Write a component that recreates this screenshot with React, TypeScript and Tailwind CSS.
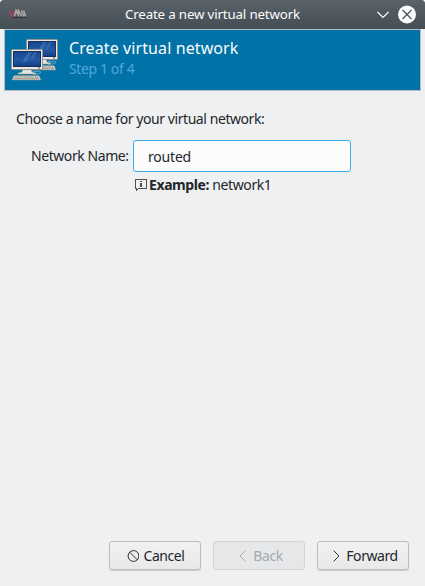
import React from "react";

function Monitor({ x, y }: { x: number; y: number }) {
  return (
    <g transform={`translate(${x} ${y})`}>
      <path d="M12 20h8l1 3 4 1v1H7v-1l4-1z" fill="#e6e6df" stroke="#8d8e88" strokeWidth=".5" />
      <path d="M22 22.5q9-.5 8 1t-8 2" fill="none" stroke="#5fa6cb" strokeWidth="1" />
      <rect x=".5" y=".5" width="31" height="20" rx="1" fill="#e9e9e2" stroke="#92938c" />
      <rect x="2" y="2" width="28" height="16" fill="#172f62" />
      <rect x="3" y="3" width="26" height="14" fill="url(#screen)" />
      <path d="M17 3h4l-5 9-5 2zM23 3h3l-4 7-3 1z" fill="#7daee0" opacity=".25" />
      <path d="M27 19h2" stroke="#555" strokeWidth="1" />
      <path d="M3 26.5h25l2 4.5H1z" fill="#d4d4ce" stroke="#85867e" strokeWidth=".6" />
      <path d="M4 28h23M3 29.7h25" stroke="#777870" strokeWidth=".9" strokeDasharray="1.5 .7" />
    </g>
  );
}

function NetworkIcon() {
  return (
    <svg className="ml-[6px] mt-[9px] h-[43px] w-[48px] shrink-0" viewBox="0 0 48 43">
      <defs>
        <linearGradient id="screen" x1="0" y1="0" x2="0" y2="1">
          <stop offset="0" stopColor="#17458d" />
          <stop offset=".55" stopColor="#2459a4" />
          <stop offset="1" stopColor="#173f87" />
        </linearGradient>
      </defs>
      <Monitor x={15} y={0} />
      <Monitor x={0} y={10} />
    </svg>
  );
}

function TitleBar() {
  return (
    <header className="flex h-[29px] shrink-0 items-center rounded-t-[3px] bg-linear-to-b from-[#596269] to-[#454d55] text-[#fcfcfc]">
      <svg className="-mt-[1px] ml-2 h-[10px] w-[20px] shrink-0" viewBox="0 0 20 10" fill="none">
        <path d="M3 8.3h16" stroke="#30353a" strokeWidth="1.6" />
        <path d="M.8 1.5l3.2 6L6.5 1.5" stroke="#98475a" strokeWidth="1.7" />
        <path d="M6.5 7.5l1.5-6 3 6M10.3 7.5v-6l3.5 6M13.3 1.5l2.7 6M15.5 1.5l2.3 6" stroke="#aaa9a6" strokeWidth="1.6" />
      </svg>
      <h1 className="-mt-[2px] ml-[97px] w-[176px] whitespace-nowrap text-[13.33px] leading-[18px] tracking-[-0.17px]">Create a new virtual network</h1>
      <svg className="ml-auto mr-[8px] h-[20px] w-[41px] shrink-0" viewBox="0 0 41 20" fill="none">
        <path d="M1.5 7l5.5 5.5L12.5 7" stroke="#fcfcfc" strokeWidth="1.2" />
        <circle cx="31" cy="9.5" r="9" fill="#fcfcfc" />
        <path d="M26.5 5l9 9m0-9l-9 9" stroke="#475057" strokeWidth="1.2" />
      </svg>
    </header>
  );
}

function Button({ label, icon, disabled = false }: { label: string; icon: React.ReactNode; disabled?: boolean }) {
  const look = disabled
    ? "border-[#d3d5d6] bg-[#e5e7e8] text-[#a8aaac]"
    : "border-[#bcbebf] bg-linear-to-b from-[#f1f1f2] to-[#e8e9ea] text-[#232629] shadow-[0_1px_1px_#c8c9ca]";
  return (
    <button disabled={disabled} className={`flex h-[29px] w-[92px] items-center justify-center gap-[4px] rounded-[3px] border pl-[2px] ${look}`}>
      <svg className="h-3 w-3 shrink-0" viewBox="0 0 12 12" fill="none" stroke="currentColor" strokeWidth=".95">{icon}</svg>
      <span className="whitespace-nowrap">{label}</span>
    </button>
  );
}

export default function App() {
  return (
    <div className="bg-white">
      <main className="flex h-[586px] w-[425px] flex-col overflow-hidden rounded-t-[3px] bg-[#eff0f1] font-['Noto_Sans',sans-serif] text-[14px] leading-[18px] tracking-[-0.43px] text-[#232629]">
        <TitleBar />
        <section className="mx-[4px] flex h-[62px] shrink-0 border border-[#b9bbc0] bg-[#0072a8]">
          <NetworkIcon />
          <div className="ml-[10px] whitespace-nowrap pt-[7px]">
            <h2 className="text-[16px] leading-[22px] tracking-[0.1px] text-[#fcfcfc]">Create virtual network</h2>
            <p className="mt-[1px] leading-[18px] tracking-[-0.38px] text-[#4fa8da]">Step 1 of 4</p>
          </div>
        </section>
        <section className="pl-4 pt-[19px]">
          <p className="whitespace-nowrap">Choose a name for your virtual network:</p>
          <div className="mt-[12px] flex items-center">
            <label htmlFor="name" className="ml-[15px] w-[102px] whitespace-nowrap">Network Name:</label>
            <input id="name" defaultValue="routed" className="h-[32px] w-[218px] rounded-[3px] border border-[#3daee9] bg-[#fcfcfc] px-[14px] tracking-[-0.2px] outline-none" />
          </div>
          <div className="ml-[119px] mt-[4px] flex h-[18px] items-center tracking-[-0.4px]">
            <svg className="mr-[2px] h-[13px] w-[12px] shrink-0" viewBox="0 0 12 13" fill="none" shapeRendering="crispEdges">
              <path d="M.5 .5h11v9h-8l-2 2v-2h-1z" stroke="#4d4f51" />
              <path d="M5 2h2v1H5zM5 4h2v4H5z" fill="#4d4f51" />
            </svg>
            <p className="whitespace-nowrap"><b>Example:</b> network1</p>
          </div>
        </section>
        <footer className="mt-auto flex justify-end gap-[12px] pb-[16px] pr-[16px]">
          <Button label="Cancel" icon={<><circle cx="6.5" cy="6" r="5.4" /><path d="M2.7 2.2l7.6 7.6" /></>} />
          <Button label="Back" disabled icon={<path d="M8.5.5L3 6l5.5 5.5" />} />
          <Button label="Forward" icon={<path d="M3.5.5L9 6l-5.5 5.5" />} />
        </footer>
      </main>
    </div>
  );
}
